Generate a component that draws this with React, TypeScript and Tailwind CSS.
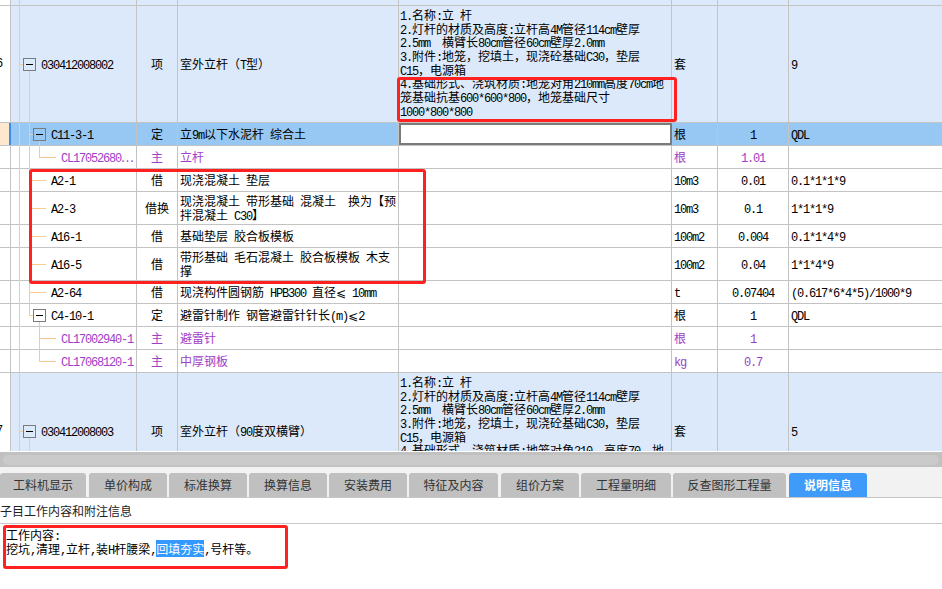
import React from "react";

type TreeKind = "top" | "root" | "l2box" | "l2boxLast" | "l2leaf" | "l3" | "l3last";
type Style = "top" | "item" | "sel" | "plain" | "main";
type Row = {
  h: number;
  hc: string;
  tree: TreeKind;
  l2Pass?: boolean;
  style: Style;
  num?: string;
  code?: string;
  type?: string;
  name?: string[];
  feat?: string[];
  unit?: string;
  qty?: string;
  formula?: string;
};

const CJK_RE = /[\u2026\u22ef\u2264\u2a7d\u2e80-\u9fff\uff00-\uffef\u3000-\u303f]/;

function T({ s }: { s: string }) {
  const parts: { t: string; c: boolean }[] = [];
  for (const ch of s) {
    const c = CJK_RE.test(ch);
    const last = parts[parts.length - 1];
    if (last && last.c === c) last.t += ch;
    else parts.push({ t: ch, c });
  }
  return (
    <>
      {parts.map((p, i) =>
        p.c ? (
          <span key={i}>{p.t}</span>
        ) : (
          <span key={i} className="font-['Liberation_Mono',monospace] text-[12px] tracking-[-1.2px]">
            {p.t}
          </span>
        )
      )}
    </>
  );
}

const LINE = "#fbc98b";

function Tree({ kind, h, l2Pass }: { kind: TreeKind; h: number; l2Pass?: boolean }) {
  const mid = Math.floor((h - 1) / 2);
  const el: React.ReactElement[] = [];
  let k = 0;
  const R = (x: number, y: number, w: number, hh: number, fill: string = LINE) =>
    el.push(<rect key={k++} x={x} y={y} width={w} height={hh} fill={fill} />);
  const box = (x0: number) => {
    el.push(
      <rect key={k++} x={x0 + 0.5} y={mid - 5.5} width={12} height={12} fill="none" stroke="#7b7b7b" />
    );
    R(x0 + 3, mid, 7, 1, "#000");
  };
  R(8, 0, 1, h);
  if (l2Pass) R(18, 0, 1, h);
  switch (kind) {
    case "root":
      R(9, mid, 3, 1);
      box(12);
      R(18, mid + 7, 1, h - mid - 7);
      break;
    case "l2box":
    case "l2boxLast":
      if (kind === "l2boxLast") R(18, 0, 1, mid + 1);
      R(19, mid, 3, 1);
      box(22);
      R(28, mid + 7, 1, h - mid - 7);
      break;
    case "l2leaf":
      R(19, mid, 16, 1);
      break;
    case "l3":
      R(28, 0, 1, h);
      R(29, mid, 16, 1);
      break;
    case "l3last":
      R(28, 0, 1, mid + 1);
      R(29, mid, 16, 1);
      break;
  }
  return (
    <svg className="absolute left-0 top-0 pointer-events-none" width={126} height={h}>
      {el}
    </svg>
  );
}

const featBase = [
  "1.名称:立 杆",
  "2.灯杆的材质及高度:立杆高4M管径114cm壁厚",
  "2.5mm  横臂长80cm管径60cm壁厚2.0mm",
  "3.附件:地笼，挖填土，现浇砼基础C30，垫层",
  "C15，电源箱",
];

const rows: Row[] = [
  { h: 6, hc: "h-[6px]", tree: "top", style: "top" },
  {
    h: 117,
    hc: "h-[117px]",
    tree: "root",
    style: "item",
    num: "6",
    code: "030412008002",
    type: "项",
    name: ["室外立杆（T型）"],
    feat: [
      ...featBase,
      "4.基础形式、浇筑材质:地笼对角210mm高度70cm地",
      "笼基础抗基600*600*800，地笼基础尺寸",
      "1000*800*800",
    ],
    unit: "套",
    qty: "",
    formula: "9",
  },
  {
    h: 23,
    hc: "h-[23px]",
    tree: "l2box",
    l2Pass: true,
    style: "sel",
    code: "C11-3-1",
    type: "定",
    name: ["立9m以下水泥杆 综合土"],
    unit: "根",
    qty: "1",
    formula: "QDL",
  },
  {
    h: 23,
    hc: "h-[23px]",
    tree: "l3last",
    l2Pass: true,
    style: "main",
    code: "CL17052680⋯",
    type: "主",
    name: ["立杆"],
    unit: "根",
    qty: "1.01",
  },
  {
    h: 23,
    hc: "h-[23px]",
    tree: "l2leaf",
    l2Pass: true,
    style: "plain",
    code: "A2-1",
    type: "借",
    name: ["现浇混凝土 垫层"],
    unit: "10m3",
    qty: "0.01",
    formula: "0.1*1*1*9",
  },
  {
    h: 33,
    hc: "h-[33px]",
    tree: "l2leaf",
    l2Pass: true,
    style: "plain",
    code: "A2-3",
    type: "借换",
    name: ["现浇混凝土 带形基础 混凝土  换为【预", "拌混凝土 C30】"],
    unit: "10m3",
    qty: "0.1",
    formula: "1*1*1*9",
  },
  {
    h: 23,
    hc: "h-[23px]",
    tree: "l2leaf",
    l2Pass: true,
    style: "plain",
    code: "A16-1",
    type: "借",
    name: ["基础垫层 胶合板模板"],
    unit: "100m2",
    qty: "0.004",
    formula: "0.1*1*4*9",
  },
  {
    h: 33,
    hc: "h-[33px]",
    tree: "l2leaf",
    l2Pass: true,
    style: "plain",
    code: "A16-5",
    type: "借",
    name: ["带形基础 毛石混凝土 胶合板模板 木支", "撑"],
    unit: "100m2",
    qty: "0.04",
    formula: "1*1*4*9",
  },
  {
    h: 23,
    hc: "h-[23px]",
    tree: "l2leaf",
    l2Pass: true,
    style: "plain",
    code: "A2-64",
    type: "借",
    name: ["现浇构件圆钢筋 HPB300 直径⩽ 10mm"],
    unit: "t",
    qty: "0.07404",
    formula: "(0.617*6*4*5)/1000*9",
  },
  {
    h: 23,
    hc: "h-[23px]",
    tree: "l2boxLast",
    style: "plain",
    code: "C4-10-1",
    type: "定",
    name: ["避雷针制作 钢管避雷针针长(m)⩽2"],
    unit: "根",
    qty: "1",
    formula: "QDL",
  },
  {
    h: 23,
    hc: "h-[23px]",
    tree: "l3",
    style: "main",
    code: "CL17002940-1",
    type: "主",
    name: ["避雷针"],
    unit: "根",
    qty: "1",
  },
  {
    h: 23,
    hc: "h-[23px]",
    tree: "l3last",
    style: "main",
    code: "CL17068120-1",
    type: "主",
    name: ["中厚钢板"],
    unit: "kg",
    qty: "0.7",
  },
  {
    h: 117,
    hc: "h-[117px]",
    tree: "root",
    style: "item",
    num: "7",
    code: "030412008003",
    type: "项",
    name: ["室外立杆（90度双横臂）"],
    feat: [...featBase, "4.基础形式、浇筑材质:地笼对角210、高度70、地", "笼基础坑基"],
    unit: "套",
    qty: "",
    formula: "5",
  },
];

function GridRow({ r }: { r: Row }) {
  const bg =
    r.style === "item" || r.style === "top"
      ? "bg-[#dce9fb]"
      : r.style === "sel"
      ? "bg-[#97c8f4]"
      : "bg-white";
  const color = r.style === "main" ? "text-[#a03ec6]" : "text-black";
  const pl =
    r.tree === "root" ? "pl-[30px]" : r.tree === "l3" || r.tree === "l3last" ? "pl-[50px]" : "pl-[40px]";
  const col0 =
    r.style === "sel"
      ? "w-[11px] shrink-0 overflow-hidden bg-[#fde7cf] border-r-2 border-[#3a8ef0]"
      : "w-[11px] shrink-0 overflow-hidden bg-white border-r border-[#c3c3c3]";
  const cell = `border-r border-[#c3c3c3] shrink-0 ${bg}`;
  return (
    <div className={`flex border-b border-[#c3c3c3] text-[12px] leading-[14px] whitespace-pre ${r.hc} ${color}`}>
      <div className={`${col0} flex items-center`}>
        {r.num && (
          <span className="-ml-[4px] font-['Liberation_Mono',monospace] text-[12px] text-black">{r.num}</span>
        )}
      </div>
      <div className={`${cell} w-[126px] relative flex items-center ${pl}`}>
        <Tree kind={r.tree} h={r.h} l2Pass={r.l2Pass} />
        {r.code && (
          <span className="relative h-[14px]">
            <T s={r.code} />
          </span>
        )}
      </div>
      <div className={`${cell} w-[41px] flex items-center justify-center`}>
        {r.type && (
          <div className="h-[14px]">
            <T s={r.type} />
          </div>
        )}
      </div>
      <div className={`${cell} w-[221px] flex flex-col justify-center pl-[2px] overflow-hidden`}>
        {r.name?.map((n, i) => (
          <div key={i} className="h-[14px]">
            <T s={n} />
          </div>
        ))}
      </div>
      {r.style === "sel" ? (
        <div className="w-[273px] shrink-0 bg-white border-2 border-[#7b7b7b]" />
      ) : (
        <div className={`${cell} w-[273px] pl-[1px] pt-[2px] leading-[13.7px] overflow-hidden`}>
          {r.feat?.map((f, i) => (
            <div key={i} className="h-[13.7px]">
              <T s={f} />
            </div>
          ))}
        </div>
      )}
      <div className={`${cell} w-[46px] flex items-center pl-[2px]`}>
        {r.unit && (
          <div className="h-[14px]">
            <T s={r.unit} />
          </div>
        )}
      </div>
      <div className={`${cell} w-[71px] flex items-center justify-center`}>
        {r.qty && (
          <div className="h-[14px]">
            <T s={r.qty} />
          </div>
        )}
      </div>
      <div className={`flex-1 ${bg} flex items-center pl-[2px] text-black`}>
        {r.formula && (
          <div className="h-[14px]">
            <T s={r.formula} />
          </div>
        )}
      </div>
    </div>
  );
}

const tabs: { t: string; c: string; active?: boolean }[] = [
  { t: "工料机显示", c: "w-[86px]" },
  { t: "单价构成", c: "ml-[3px] w-[78px]" },
  { t: "标准换算", c: "ml-[2px] w-[78px]" },
  { t: "换算信息", c: "ml-[2px] w-[78px]" },
  { t: "安装费用", c: "ml-[2px] w-[78px]" },
  { t: "特征及内容", c: "ml-[2px] w-[89px]" },
  { t: "组价方案", c: "ml-[3px] w-[78px]" },
  { t: "工程量明细", c: "ml-[2px] w-[90px]" },
  { t: "反查图形工程量", c: "ml-[2px] w-[113px]" },
  { t: "说明信息", c: "ml-[3px] w-[78px]", active: true },
];

export default function App() {
  return (
    <div className="relative w-[942px] h-[589px] overflow-hidden bg-white font-['Noto_Sans_CJK_SC','DejaVu_Sans',sans-serif] text-black">
      <div className="h-[451px] overflow-hidden">
        {rows.map((r, i) => (
          <GridRow key={i} r={r} />
        ))}
      </div>
      <div className="h-[16px] border-t border-white bg-[#c1c1c1] flex items-center px-[3px]">
        <div className="h-[10px] flex-1 rounded-full bg-[#cacaca]" />
      </div>
      <div className="h-[31px] bg-[#f2f2f2] border-b border-[#c6c6c6] flex items-end">
        {tabs.map((t) => (
          <div
            key={t.t}
            className={`${t.c} h-[24px] shrink-0 rounded-t-[3px] flex items-center justify-center text-[12px] leading-[16px] ${
              t.active ? "bg-[#3f9bfa] text-white font-bold" : "bg-[#c0c0c0] text-[#333]"
            }`}
          >
            {t.t}
          </div>
        ))}
      </div>
      <div className="h-[26px] border-b border-[#c8c8c8] flex items-center text-[12px] leading-[16px] text-[#222]">
        子目工作内容和附注信息
      </div>
      <div className="pl-[6px] pt-[4px] text-[12px] leading-[13.5px] whitespace-pre">
        <div className="h-[13.5px]">
          <T s="工作内容:" />
        </div>
        <div className="h-[13.5px]">
          <T s="挖坑,清理,立杆,装H杆腰梁," />
          <span className="bg-[#3399ff] text-white">
            <T s="回填夯实" />
          </span>
          <T s=",号杆等。" />
        </div>
      </div>

      <div className="absolute left-[397px] top-[77px] w-[280px] h-[45px] border-[3px] border-[#ff2020] rounded-[3px]" />
      <div className="absolute left-[29px] top-[169px] w-[397px] h-[115px] border-[3px] border-[#ff2020] rounded-[3px]" />
      <div className="absolute left-[3px] top-[525px] w-[285px] h-[44px] border-[3px] border-[#ff2020] rounded-[3px]" />
    </div>
  );
}
